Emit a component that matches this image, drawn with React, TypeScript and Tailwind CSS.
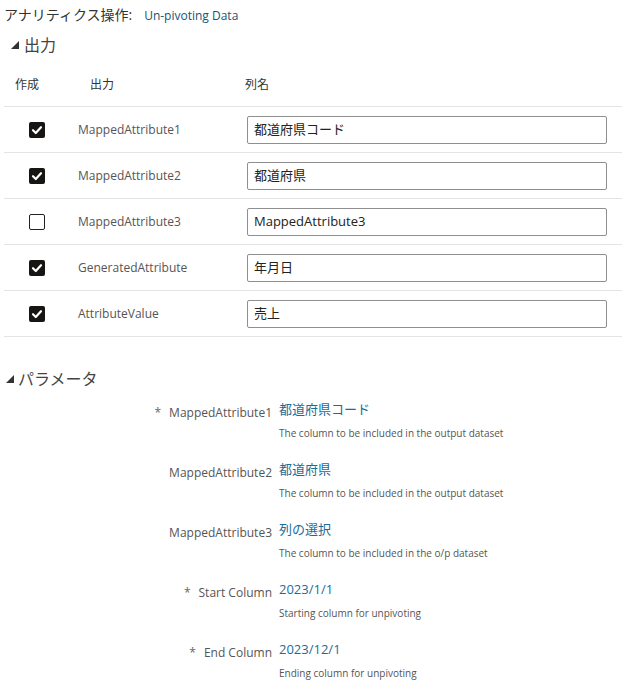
const font = { fontFamily: '"Open Sans", "Noto Sans CJK JP", sans-serif' };

type OutRow = { checked: boolean; name: string; value: string };

const rows: OutRow[] = [
  { checked: true, name: "MappedAttribute1", value: "都道府県コード" },
  { checked: true, name: "MappedAttribute2", value: "都道府県" },
  { checked: false, name: "MappedAttribute3", value: "MappedAttribute3" },
  { checked: true, name: "GeneratedAttribute", value: "年月日" },
  { checked: true, name: "AttributeValue", value: "売上" },
];

type Param = { required: boolean; label: string; value: string; help: string };

const params: Param[] = [
  { required: true, label: "MappedAttribute1", value: "都道府県コード", help: "The column to be included in the output dataset" },
  { required: false, label: "MappedAttribute2", value: "都道府県", help: "The column to be included in the output dataset" },
  { required: false, label: "MappedAttribute3", value: "列の選択", help: "The column to be included in the o/p dataset" },
  { required: true, label: "Start Column", value: "2023/1/1", help: "Starting column for unpivoting" },
  { required: true, label: "End Column", value: "2023/12/1", help: "Ending column for unpivoting" },
];

function Triangle() {
  return (
    <svg width="8" height="8" viewBox="0 0 8 8" className="shrink-0">
      <polygon points="8,0 8,8 0,8" fill="#333" />
    </svg>
  );
}

function Checkbox({ checked }: { checked: boolean }) {
  if (!checked)
    return <div className="w-4 h-4 rounded-[2px] border border-[#222] bg-white" />;
  return (
    <div className="w-4 h-4 rounded-[2px] bg-[#161513] flex items-center justify-center">
      <svg width="12" height="12" viewBox="0 0 12 12">
        <path d="M2 6.2 L4.8 9 L10 3.2" stroke="#fff" strokeWidth="2.2" fill="none" strokeLinecap="round" strokeLinejoin="round" />
      </svg>
    </div>
  );
}

export default function App() {
  return (
    <div className="w-[642px] h-[699px] bg-white text-[#333] overflow-hidden" style={font}>
      <div className="flex items-baseline pl-1 pt-[4px] h-[22px]">
        <span className="text-[14px] text-[#333]">アナリティクス操作:</span>
        <span className="text-[12px] text-[#195374] ml-[12px]">Un-pivoting Data</span>
      </div>

      <div className="flex items-center gap-[5px] pl-[11px] mt-[12px] h-[22px]">
        <Triangle />
        <span className="text-[16px] text-[#444]">出力</span>
      </div>

      <div className="ml-1 mr-5 mt-[12px]">
        <div className="flex items-center h-[39px] pb-[5px] text-[12px] text-[#333] border-b border-[#e4e4e4]">
          <div className="w-[86px] pl-[11px]">作成</div>
          <div className="w-[155px]">出力</div>
          <div>列名</div>
        </div>
        {rows.map((r) => (
          <div key={r.name} className="flex items-center h-[46px] border-b border-[#e4e4e4]">
            <div className="w-[74px] pl-[25px]">
              <Checkbox checked={r.checked} />
            </div>
            <div className="w-[169px] text-[12px] text-[#555]">{r.name}</div>
            <div className="w-[360px] h-[28px] border border-[#8f8f8f] rounded-[2px] flex items-center px-[6px] text-[13px] text-[#222]">
              {r.value}
            </div>
          </div>
        ))}
      </div>

      <div className="flex items-center gap-[4px] pl-[6px] mt-[31px] h-[22px]">
        <Triangle />
        <span className="text-[16px] text-[#444]">パラメータ</span>
      </div>

      <div className="mt-[9px] flex flex-col">
        {params.map((p) => (
          <div key={p.label} className="flex h-[60px]">
            <div className="w-[279px] flex justify-end items-start pt-[5px] pr-[7px] text-[12px] text-[#555]">
              {p.required && <span className="mr-[8px] text-[#666]">*</span>}
              <span>{p.label}</span>
            </div>
            <div className="flex flex-col">
              <span className="text-[13px] text-[#1b6c96] leading-[20px]">{p.value}</span>
              <span className="text-[10px] text-[#555] mt-[7px]">{p.help}</span>
            </div>
          </div>
        ))}
      </div>
    </div>
  );
}
